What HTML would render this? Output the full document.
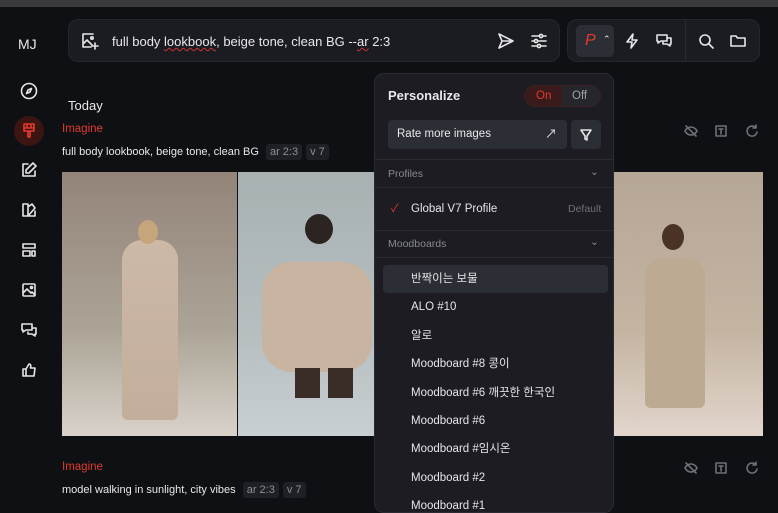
<!DOCTYPE html>
<html><head><meta charset="utf-8"><style>
*{box-sizing:border-box;margin:0;padding:0}
body{width:778px;height:502px;overflow:hidden;background:#0f1014;font-family:"Liberation Sans","Noto Sans CJK KR",sans-serif;color:#e8e8ea;position:relative;line-height:1.2}
.a{position:absolute}
.top{left:0;top:0;width:778px;height:7px;background:#3b3b3d}
svg{fill:none;stroke:#e6e6e8;stroke-width:1.6;stroke-linecap:round;stroke-linejoin:round}
.box{background:#1b1c21;border:1px solid #26272d;border-radius:10px}
.t{font-size:13px}
.tag{background:#1f2025;color:#8d8e94;font-size:11px;padding:2px 4px;border-radius:3px;margin-left:4px}
.red{color:#e03a2e;font-size:11.5px}
.pop{left:374px;top:73px;width:240px;height:440px;background:#1c1c22;border:1px solid #2b2c33;border-radius:10px;overflow:hidden}
.item{position:absolute;left:36px;font-size:11.5px;color:#e6e6e8;line-height:14px;height:14px;white-space:nowrap}
.sep{position:absolute;left:0;width:240px;height:1px;background:#2b2c33}
.gray{color:#888a92;font-size:10.5px;line-height:12px}
</style></head><body>
<div class="a top"></div>
<div class="a" style="left:18px;top:36px;font-size:14px">MJ</div>
<svg class="a" style="left:20px;top:82px" width="18" height="18" viewBox="0 0 18 18"><circle cx="9" cy="9" r="7.5"/><path d="M11.5 6.5L10 10 6.5 11.5 8 8z"/></svg>
<div class="a" style="left:14px;top:116px;width:30px;height:30px;border-radius:50%;background:#3a1512"></div>
<svg class="a" style="left:21px;top:122px;stroke:#e63a2c" width="16" height="18" viewBox="0 0 16 18"><path d="M3 2h10v7H3zM3 6h10M6 2v3M10 2v3M7 9v6h2V9"/></svg>
<svg class="a" style="left:21px;top:162px" width="16" height="16" viewBox="0 0 16 16"><path d="M7 2H2v12h12V9M12 1l3 3-7 7H5V8z"/></svg>
<svg class="a" style="left:21px;top:202px" width="16" height="16" viewBox="0 0 16 16"><path d="M2 2h5v12H2zM7 5l4-3 3 4-7 8M7 14h7V9"/></svg>
<svg class="a" style="left:21px;top:242px" width="16" height="16" viewBox="0 0 16 16"><path d="M2 2h12v4H2zM2 9h7v5H2zM11 9h3v5h-3z"/></svg>
<svg class="a" style="left:21px;top:282px" width="16" height="16" viewBox="0 0 16 16"><rect x="2" y="2" width="12" height="12" rx="1"/><path d="M2 11l4-4 4 4 1-1 3 3"/><circle cx="10.5" cy="5.5" r="1"/></svg>
<svg class="a" style="left:21px;top:322px" width="16" height="16" viewBox="0 0 16 16"><path d="M1 2h10v6H5l-3 2V8H1zM11 6h4v6h-1v2l-3-2H7v-2"/></svg>
<svg class="a" style="left:21px;top:362px" width="16" height="16" viewBox="0 0 16 16"><path d="M2 7h3v7H2zM5 7l3-5c2 0 2 2 1.5 4H14l-1 8H5"/></svg>
<div class="a box" style="left:68px;top:19px;width:492px;height:43px"></div>
<svg class="a" style="left:81px;top:32px" width="18" height="18" viewBox="0 0 18 18"><path d="M12 2H2v13h8M2 12l4-4 5 5"/><circle cx="11" cy="6" r="1.2"/><path d="M14 11v6M11 14h6"/></svg>
<div class="a t" style="left:112px;top:34px">full body <span style="text-decoration:underline wavy #c33;text-decoration-thickness:1px">lookbook</span>, beige tone, clean BG --<span style="text-decoration:underline wavy #c33;text-decoration-thickness:1px">ar</span> 2:3</div>
<svg class="a" style="left:497px;top:32px" width="18" height="18" viewBox="0 0 18 18"><path d="M2 2l14 7-14 7 3-7zM5 9h11"/></svg>
<svg class="a" style="left:530px;top:32px" width="18" height="18" viewBox="0 0 18 18"><path d="M2 4h14M2 9h14M2 14h14"/><circle cx="11" cy="4" r="1.6" fill="#1b1c21"/><circle cx="6" cy="9" r="1.6" fill="#1b1c21"/><circle cx="9" cy="14" r="1.6" fill="#1b1c21"/></svg>
<div class="a box" style="left:567px;top:19px;width:193px;height:43px"></div>
<div class="a" style="left:576px;top:25px;width:38px;height:32px;background:#2c2e36;border-radius:5px"></div>
<div class="a" style="left:585px;top:31px;color:#e63a2c;font-style:italic;font-size:16px">P</div>
<div class="a" style="left:603px;top:34px;font-size:9px">&#8963;</div>
<svg class="a" style="left:624px;top:32px" width="16" height="18" viewBox="0 0 16 18"><path d="M9 2L3 10h5l-1 6 6-8H8z"/></svg>
<svg class="a" style="left:655px;top:32px" width="18" height="18" viewBox="0 0 18 18"><path d="M2 3h10v6H6l-3 2V9H2zM12 6h4v6h-1v2l-3-2H8v-2"/></svg>
<div class="a" style="left:685px;top:21px;width:1px;height:40px;background:#2b2c33"></div>
<svg class="a" style="left:697px;top:32px" width="18" height="18" viewBox="0 0 18 18"><circle cx="8" cy="8" r="5"/><path d="M12 12l4 4"/></svg>
<svg class="a" style="left:729px;top:32px" width="18" height="18" viewBox="0 0 18 18"><path d="M2 4h5l1.5 2H16v8H2z"/></svg>
<div class="a" style="left:68px;top:98px;font-size:13px">Today</div>
<div class="a red" style="left:62px;top:123px">Imagine</div>
<div class="a" style="left:62px;top:146px;font-size:11px">full body lookbook, beige tone, clean BG <span class="tag">ar 2:3</span><span class="tag">v 7</span></div>
<div class="a" style="left:62px;top:172px;width:175px;height:264px;background:linear-gradient(#948479,#aba496 60%,#d8d2ca)"></div>
<div class="a" style="left:122px;top:240px;width:56px;height:180px;background:linear-gradient(#ccb9a6,#c2ae9a);border-radius:20px 20px 6px 6px"></div>
<div class="a" style="left:138px;top:220px;width:20px;height:24px;border-radius:50%;background:#c7a57c"></div>
<div class="a" style="left:238px;top:172px;width:140px;height:264px;background:linear-gradient(#a7b1b2,#b6bec0 60%,#c8cfd2)"></div>
<div class="a" style="left:262px;top:262px;width:110px;height:110px;background:#c8b4a0;border-radius:30px"></div>
<div class="a" style="left:305px;top:214px;width:28px;height:30px;border-radius:50%;background:#2c2420"></div>
<div class="a" style="left:295px;top:368px;width:25px;height:30px;background:#3a2c26"></div>
<div class="a" style="left:328px;top:368px;width:25px;height:30px;background:#3a2c26"></div>
<div class="a" style="left:613px;top:172px;width:150px;height:264px;background:linear-gradient(#b5a696,#c4b4a2 60%,#e2d5cc)"></div>
<div class="a" style="left:645px;top:258px;width:60px;height:150px;background:#bcab92;border-radius:18px 18px 6px 6px"></div>
<div class="a" style="left:662px;top:224px;width:22px;height:26px;border-radius:50%;background:#4a3226"></div>
<svg class="a" style="left:684px;top:124px;stroke:#6e7078" width="14" height="14" viewBox="0 0 14 14"><path d="M1 7s2-4 6-4 6 4 6 4-2 4-6 4-6-4-6-4M2 2l10 10"/></svg>
<svg class="a" style="left:714px;top:124px;stroke:#6e7078" width="14" height="14" viewBox="0 0 14 14"><rect x="2" y="2" width="10" height="10"/><path d="M5 5h4M7 5v5"/></svg>
<svg class="a" style="left:745px;top:124px;stroke:#6e7078" width="14" height="14" viewBox="0 0 14 14"><path d="M11 4a5 5 0 1 0 1 4M11 1v3H8"/></svg>
<svg class="a" style="left:684px;top:461px;stroke:#6e7078" width="14" height="14" viewBox="0 0 14 14"><path d="M1 7s2-4 6-4 6 4 6 4-2 4-6 4-6-4-6-4M2 2l10 10"/></svg>
<svg class="a" style="left:714px;top:461px;stroke:#6e7078" width="14" height="14" viewBox="0 0 14 14"><rect x="2" y="2" width="10" height="10"/><path d="M5 5h4M7 5v5"/></svg>
<svg class="a" style="left:745px;top:461px;stroke:#6e7078" width="14" height="14" viewBox="0 0 14 14"><path d="M11 4a5 5 0 1 0 1 4M11 1v3H8"/></svg>
<div class="a red" style="left:62px;top:461px">Imagine</div>
<div class="a" style="left:62px;top:484px;font-size:11px">model walking in sunlight, city vibes <span class="tag">ar 2:3</span><span class="tag">v 7</span></div>
<div class="a pop">
 <div class="a" style="left:13px;top:14px;font-size:13px;font-weight:bold">Personalize</div>
 <div class="a" style="left:149px;top:11px;width:77px;height:22px;border-radius:11px;background:#26272d;border:1px solid #3a2020;overflow:hidden">
  <div class="a" style="left:0;top:0;width:37px;height:22px;background:#3a1a1a"></div>
  <div class="a" style="left:11px;top:0;line-height:20px;font-size:11.5px;color:#e63a2c">On</div>
  <div class="a" style="left:47px;top:0;line-height:20px;font-size:11.5px;color:#a0a2a8">Off</div>
 </div>
 <div class="a" style="left:13px;top:46px;width:179px;height:29px;background:#2c2e36;border-radius:4px"></div>
 <div class="a" style="left:22px;top:46px;line-height:29px;font-size:11.5px">Rate more images</div>
 <div class="a" style="left:170px;top:46px;line-height:29px;font-size:12px">&#8599;</div>
 <div class="a" style="left:196px;top:46px;width:30px;height:29px;background:#2c2e36;border-radius:4px"></div>
 <svg class="a" style="left:204px;top:54px" width="14" height="14" viewBox="0 0 14 14"><path d="M2 2h10L8 8v4L6 11V8z"/></svg>
 <div class="sep" style="top:85px"></div>
 <div class="a gray" style="left:13px;top:94px">Profiles</div>
 <div class="a gray" style="left:215px;top:92px">&#8964;</div>
 <div class="sep" style="top:113px"></div>
 <div class="a" style="left:16px;top:128px;color:#e63a2c;font-size:11px;line-height:14px">&#10003;</div>
 <div class="item" style="top:128px">Global V7 Profile</div>
 <div class="a gray" style="left:193px;top:129px;color:#6e7078">Default</div>
 <div class="sep" style="top:156px"></div>
 <div class="a gray" style="left:13px;top:164px">Moodboards</div>
 <div class="a gray" style="left:215px;top:162px">&#8964;</div>
 <div class="sep" style="top:183px"></div>
 <div class="a" style="left:8px;top:191px;width:225px;height:28px;background:#2c2e36;border-radius:4px"></div>
 <div class="item" style="top:198px">반짝이는 보물</div>
 <div class="item" style="top:226px">ALO #10</div>
 <div class="item" style="top:255px">알로</div>
 <div class="item" style="top:283px">Moodboard #8 콩이</div>
 <div class="item" style="top:312px">Moodboard #6 깨끗한 한국인</div>
 <div class="item" style="top:340px">Moodboard #6</div>
 <div class="item" style="top:368px">Moodboard #임시온</div>
 <div class="item" style="top:397px">Moodboard #2</div>
 <div class="item" style="top:425px">Moodboard #1</div>
</div>
</body></html>
